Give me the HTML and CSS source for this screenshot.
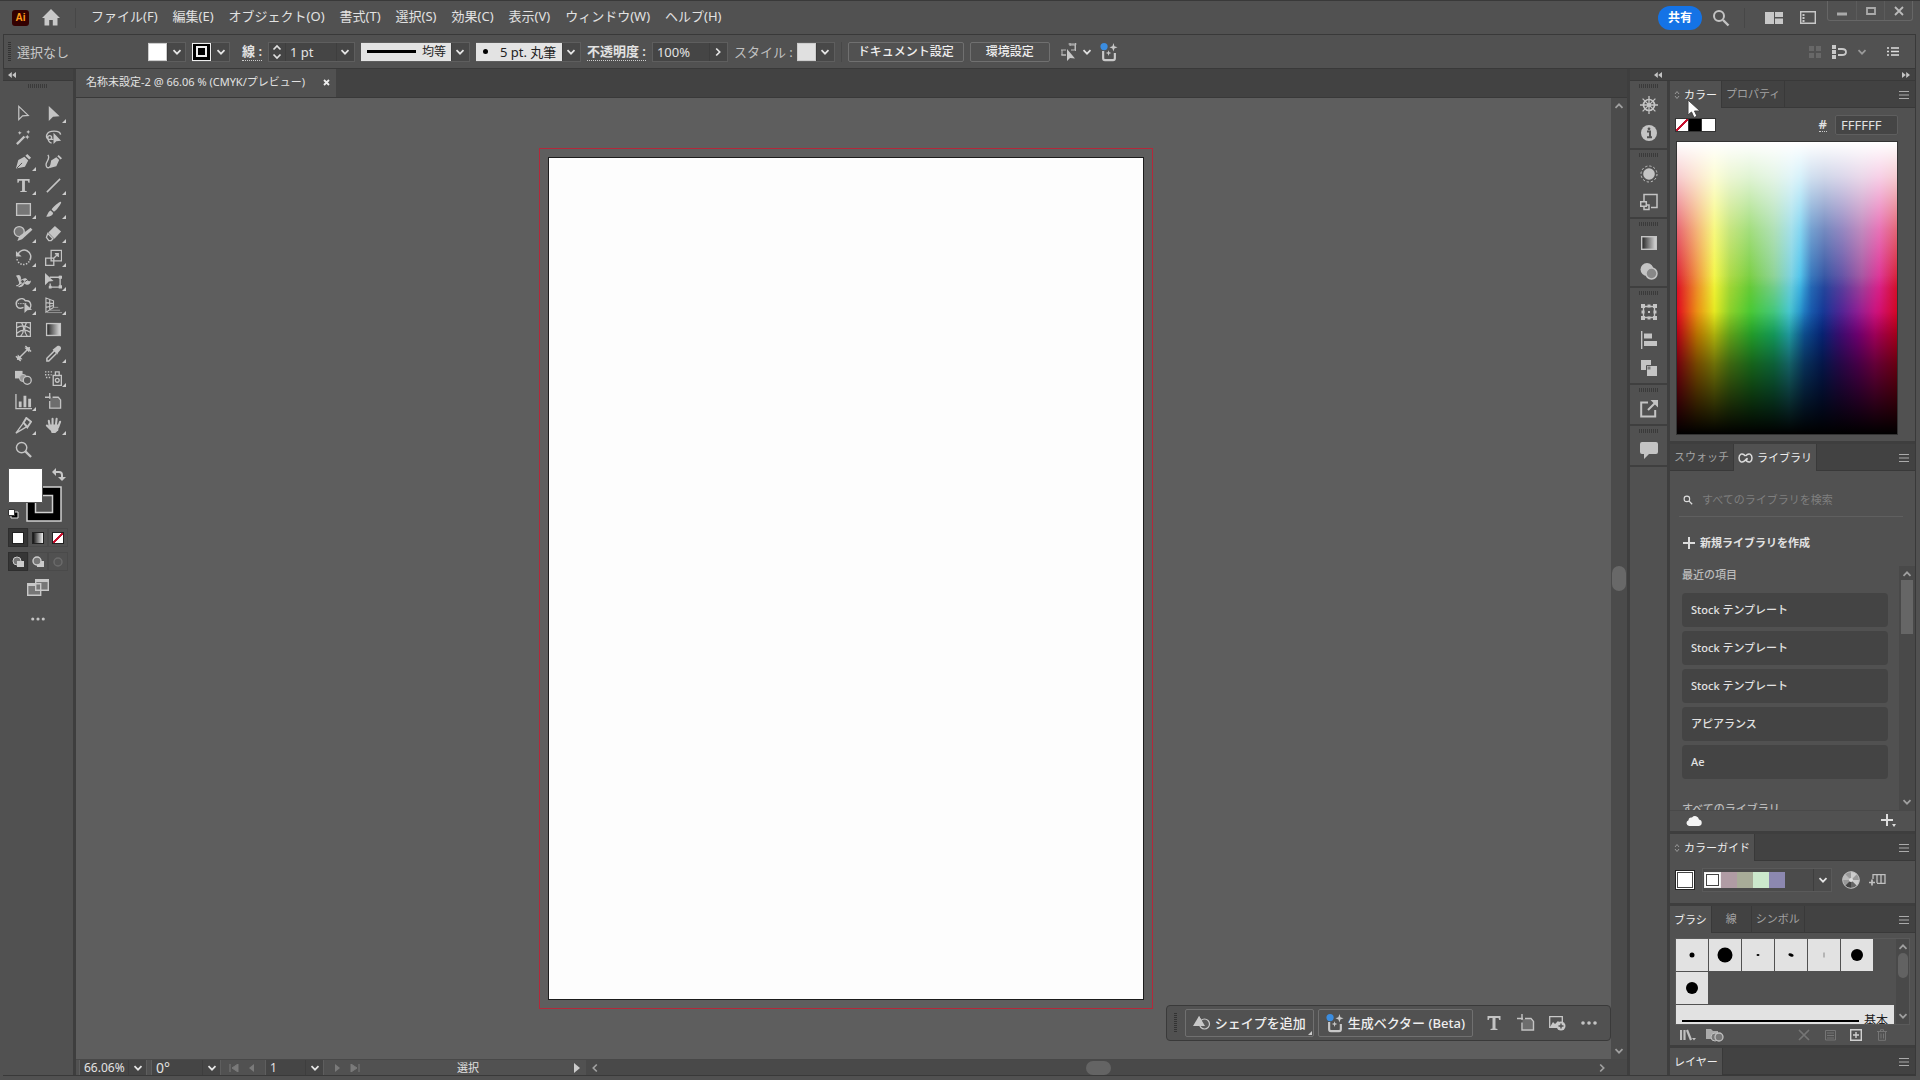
FILE: index.html
```html
<!DOCTYPE html>
<html lang="ja">
<head>
<meta charset="utf-8">
<title>名称未設定-2</title>
<link rel="stylesheet" href="styles.css">
</head>
<body>
<svg class="defs" aria-hidden="true">
  <symbol id="chev" viewBox="0 0 10 10"><path d="M1.500 3.200 5 6.700 8.500 3.200" fill="none" stroke="currentColor" stroke-width="1.700"/></symbol>
  <symbol id="burger" viewBox="0 0 10 8"><path d="M0 .5h10M0 4h10M0 7.500h10" stroke="currentColor" fill="none"/></symbol>
  <symbol id="updown" viewBox="0 0 6 10"><path d="M1 4 3 1.500 5 4M1 6l2 2.500L5 6" stroke="currentColor" fill="none"/></symbol>
  <symbol id="dleft" viewBox="0 0 8 6"><path d="M3.800 0v6L0 3zM8 0v6L4.200 3z" fill="currentColor"/></symbol>
  <symbol id="dots" viewBox="0 0 16 4"><g fill="currentColor"><circle cx="2" cy="2" r="1.800"/><circle cx="8" cy="2" r="1.800"/><circle cx="14" cy="2" r="1.800"/></g></symbol>
  <symbol id="search" viewBox="0 0 18 18"><circle cx="7" cy="7" r="5" fill="none" stroke="currentColor" stroke-width="2"/><path d="m11 11 5.500 5.500" stroke="currentColor" stroke-width="2.400"/></symbol>
  <symbol id="type" viewBox="0 0 18 18"><path d="M2.500 2h13v4h-1.200l-.8-2h-3v10.500l2 .5v1h-7v-1l2-.5V4h-3l-.8 2H2.500z" fill="currentColor"/></symbol>
  <symbol id="artb" viewBox="0 0 18 18"><path d="M5 0v6M0 4.500h6M5 8.500v7.500h11.500V7.500L14 4.500H8" fill="none" stroke="currentColor" stroke-width="1.400"/><path d="M5.500 5H13l3 3v7.500H5.500z" fill="currentColor" opacity=".25"/></symbol>
  <symbol id="gen" viewBox="0 0 20 22"><path d="M3.500 10v8q0 2 2 2h9q2 0 2-2v-6" fill="none" stroke="#c8c8c8" stroke-width="2.400"/><path d="m15 1 1 3.500 3.500 1.200-3.500 1.300-1 3.500-1.200-3.500-3.300-1.300 3.300-1.200zM9.500 9l.8 2.400 2.400.8-2.400.8-.8 2.400-.8-2.400-2.400-.8 2.400-.8z" fill="#c8c8c8"/><circle cx="4.500" cy="5" r="4" fill="#3b8de0"/></symbol>
  <symbol id="gradi" viewBox="0 0 18 18"><rect x="1.700" y="2.700" width="14.600" height="12.600" fill="url(#gg)" stroke="currentColor" stroke-width="1.400"/></symbol>
  <linearGradient id="gg"><stop offset="0" stop-color="#222"/><stop offset="1" stop-color="#ddd"/></linearGradient>
</svg>

<div class="app">
  <header class="menubar">
    <span class="logo">Ai</span>
    <button class="icon-btn" aria-label="ホーム"><svg width="18" height="17" viewBox="0 0 18 17"><path d="M9 0 18 9h-2.500v7.500h-4.700V11H7.200v5.500H2.500V9H0z" fill="#c8c8c8"/></svg></button>
    <i class="vr"></i>
    <nav class="menus">
      <button>ファイル(F)</button><button>編集(E)</button><button>オブジェクト(O)</button><button>書式(T)</button><button>選択(S)</button><button>効果(C)</button><button>表示(V)</button><button>ウィンドウ(W)</button><button>ヘルプ(H)</button>
    </nav>
    <div class="top-right">
      <button class="share">共有</button>
      <button class="icon-btn" aria-label="検索"><svg width="18" height="18"><use href="#search"/></svg></button>
      <i class="vr"></i>
      <button class="icon-btn wide" aria-label="ドキュメントを並べる"><svg width="18" height="12"><path d="M0 0h9v12H0zM10 0h8v5h-8zM10 6.500h8V12h-8z" fill="#c8c8c8"/></svg></button>
      <button class="icon-btn" aria-label="ワークスペース"><svg width="16" height="13"><path d="M.7.7h14.600v11.600H.7z" fill="none" stroke="#c8c8c8" stroke-width="1.400"/><path d="M3.500 3v8" stroke="#c8c8c8" stroke-width="2" stroke-dasharray="2 1"/></svg></button>
    </div>
    <div class="win">
      <button aria-label="最小化"><svg width="10" height="10"><path d="M0 8h10" stroke="#aaa" stroke-width="3"/></svg></button>
      <button aria-label="最大化"><svg width="10" height="10"><path d="M1 2h8v6H1z" fill="none" stroke="#aaa" stroke-width="1.800"/></svg></button>
      <button aria-label="閉じる"><svg width="10" height="10"><path d="m1 1 8 8M9 1 1 9" stroke="#bbb" stroke-width="1.800"/></svg></button>
    </div>
  </header>

  <section class="control">
    <i class="grip-v"></i>
    <span class="sel-state">選択なし</span>
    <div class="combo"><button class="sw white" aria-label="塗り"></button><button class="drop" aria-label="塗りを選択"><svg width="10" height="10"><use href="#chev"/></svg></button></div>
    <div class="combo"><button class="sw stroke" aria-label="線"></button><button class="drop" aria-label="線を選択"><svg width="10" height="10"><use href="#chev"/></svg></button></div>
    <label class="dotted strong lead" for="sw-width">線 :</label>
    <div class="combo field">
      <span class="spin"><svg width="10" height="16"><path d="M1.500 5.500 5 2l3.500 3.500M1.500 10.500 5 14l3.500-3.500" fill="none" stroke="#e0e0e0" stroke-width="1.700"/></svg></span>
      <input id="sw-width" class="w50" value="1 pt"><button class="drop" aria-label="線幅"><svg width="10" height="10"><use href="#chev"/></svg></button>
    </div>
    <div class="combo"><span class="light profile"><i></i><select aria-label="可変線幅プロファイル"><option>均等</option></select></span><button class="drop" aria-label="プロファイル"><svg width="10" height="10"><use href="#chev"/></svg></button></div>
    <div class="combo"><span class="light brush"><i></i><select aria-label="ブラシ定義"><option>5 pt. 丸筆</option></select></span><button class="drop" aria-label="ブラシ"><svg width="10" height="10"><use href="#chev"/></svg></button></div>
    <label class="dotted strong" for="opac">不透明度 :</label>
    <div class="combo field"><input id="opac" class="w56" value="100%"><button class="drop" aria-label="不透明度"><svg class="r270" width="10" height="10"><use href="#chev"/></svg></button></div>
    <span class="dim">スタイル :</span>
    <div class="combo"><button class="sw style" aria-label="スタイル"></button><button class="drop" aria-label="スタイルを選択"><svg width="10" height="10"><use href="#chev"/></svg></button></div>
    <i class="vr"></i>
    <button class="outline w116">ドキュメント設定</button>
    <button class="outline w80">環境設定</button>
    <button class="icon-btn sim" aria-label="類似オブジェクトを選択"><svg width="18" height="20" viewBox="0 0 18 20"><path d="M10 3h5v5h-4M1 8h5M2 8v5h4M8.500 2h8M15.500 1v8M10 1v3M1 13h5" fill="none" stroke="#bbb"/><path d="M7 7v12l3-3 5 .5z" fill="#c8c8c8"/></svg><svg width="10" height="10"><use href="#chev"/></svg></button>
    <button class="icon-btn" aria-label="生成"><svg width="18" height="20"><use href="#gen"/></svg></button>
    <div class="control-right">
      <svg width="14" height="14" fill="#686868"><path d="M1 1h5v5H1zM8 1h5v5H8zM1 8h5v5H1zM8 8h5v5H8z"/></svg>
      <svg width="15" height="14"><path d="M0 0h4v4H0zM0 5h4v4H0zM0 10h4v4H0z" fill="#c8c8c8"/><path d="M6 4h4q4 0 4 3t-4 3H6" fill="none" stroke="#c8c8c8" stroke-width="1.800"/></svg>
      <svg class="off" width="10" height="10"><use href="#chev"/></svg>
      <svg class="list" width="12" height="9"><path d="M0 1h2M4 1h8M0 4.500h2M4 4.500h8M0 8h2M4 8h8" stroke="#ddd" stroke-width="1.400"/></svg>
    </div>
  </section>

  <main class="work">
    <aside class="tools">
      <div class="dock-head"><svg width="8" height="6"><use href="#dleft"/></svg></div>
      <i class="grip"></i>
      <div class="tool-grid">
        <button aria-label="選択"><svg viewBox="0 0 18 18"><path d="M4 1.500v14l4-4 6-.5z" fill="none" stroke="currentColor" stroke-width="1.300"/></svg></button>
        <button class="more" aria-label="ダイレクト選択"><svg viewBox="0 0 18 18"><path d="M4 1v16l4.500-4.500 7-.5z" fill="currentColor"/></svg></button>
        <button aria-label="自動選択"><svg viewBox="0 0 18 18"><path d="m2 16 8-8" stroke="currentColor" stroke-width="2.400"/><path d="m13 6 .8 1.700 1.700.8-1.700.8L13 11l-.8-1.700-1.700-.8 1.700-.8zM5 2l.7 1.400 1.400.7-1.400.7L5 6.200l-.7-1.400-1.400-.7 1.400-.7zM14 1l.7 1.400 1.400.7-1.400.7L14 5.200l-.7-1.400-1.400-.7 1.400-.7z" fill="currentColor"/></svg></button>
        <button aria-label="なげなわ"><svg viewBox="0 0 18 18"><path d="M9 11H4a3.500 3.500 0 0 1-2-5c1.500-5 14-5 14.500 0M5 11a2 2 0 1 0-2-2q.500 5 4 6" fill="none" stroke="currentColor" stroke-width="1.500"/><path d="M9 4v12l3-3 5-.5z" fill="currentColor"/></svg></button>
        <button class="more" aria-label="ペン"><svg viewBox="0 0 18 18"><path d="m1 16.500 2.500-9L10 4l4 4-3.500 6.500zM11 3l2-2 4 4-2 2z" fill="currentColor"/><path d="m2 16 5.500-5.500" stroke="#515151"/></svg></button>
        <button aria-label="曲線"><svg viewBox="0 0 18 18"><path d="m5 16 1.500-8L12 4.500l3 3L12 14zM13 3.500 14.500 2 18 5.500 16.500 7z" fill="currentColor"/><path d="M3 2c4 5-5 8-1 13 2 2 4-1 6-4" fill="none" stroke="currentColor" stroke-width="1.400"/></svg></button>
        <button class="more" aria-label="文字"><svg><use href="#type"/></svg></button>
        <button class="more" aria-label="直線"><svg viewBox="0 0 18 18"><path d="M2 16 16 2" stroke="currentColor" stroke-width="1.700"/></svg></button>
        <button class="more" aria-label="長方形"><svg viewBox="0 0 18 18"><path d="M1.700 2.700h14.600v12.600H1.700z" fill="#777" stroke="currentColor" stroke-width="1.400"/></svg></button>
        <button class="more" aria-label="ブラシ"><svg viewBox="0 0 18 18"><path d="M17 1c1 1-5 9-7.500 10.500L7 9C9 6 16 0 17 1zM6 10l2.700 2.700C8 16 4 17 1 16.500 3 15 3 11 6 10z" fill="currentColor"/></svg></button>
        <button class="more" aria-label="Shaper"><svg class="w20" viewBox="0 0 20 18"><circle cx="6" cy="7" r="5.300" fill="#777" stroke="currentColor" stroke-width="1.400"/><path d="M18 3 20 5 9 15l-5 2 2-5z" fill="currentColor"/></svg></button>
        <button class="more" aria-label="消しゴム"><svg viewBox="0 0 18 18"><path d="m10.500 1 6.500 6-7 7.500L3.500 8z" fill="currentColor"/><path d="m3 9 5.500 5.500-2 2H4l-2.500-3.500z" fill="none" stroke="currentColor" stroke-width="1.400"/></svg></button>
        <button class="more" aria-label="回転"><svg viewBox="0 0 18 18"><path d="M3 6a7 7 0 1 1 12.500 6" fill="none" stroke="currentColor" stroke-width="1.600"/><path d="M15 13a7 7 0 0 1-13-4" fill="none" stroke="currentColor" stroke-width="1.600" stroke-dasharray="1.500 1.500"/><path d="M1 2v6h6z" fill="currentColor"/></svg></button>
        <button class="more" aria-label="拡大・縮小"><svg viewBox="0 0 18 18"><path d="M6.500 1.500h11v11h-11zM.7 9.700h8.600v7.600H.7zM9 10l5-5m-3.500 0H14v3.500" fill="none" stroke="currentColor" stroke-width="1.400"/></svg></button>
        <button class="more" aria-label="線幅"><svg viewBox="0 0 18 18"><path d="M1 3c5-3 6 2 5 5 2-2 5-4 7-1 1 2 2 2 4 1-1 6-5 5-7 3-2 5-8 5-9 2 3 0 4-2 3-4S3 5 1 3z" fill="currentColor"/><path d="m2 15 13-9" stroke="#515151"/><circle cx="8" cy="9" r="2" fill="#515151" stroke="currentColor"/></svg></button>
        <button class="more" aria-label="自由変形"><svg viewBox="0 0 18 18"><path d="M5 4.500h12M16 3v13M4.500 15H17M5.500 11v5" fill="none" stroke="currentColor" stroke-width="1.400"/><path d="M0 0v13l4-4 5-.5zM14.500 3H18v3h-3.500zM14.500 13H18v3.500h-3.500zM4 13.500h3v3H4z" fill="currentColor"/></svg></button>
        <button class="more" aria-label="シェイプ形成"><svg viewBox="0 0 18 18"><path d="M2 10C-1 3 8-1 11 4c7-1 7 8 3 9M2 10c2 3 5 2 7 1" fill="none" stroke="currentColor" stroke-width="1.500"/><path d="M3 7h10" stroke="currentColor" stroke-dasharray="1.500 1"/><path d="M10 6v11l3-3 5-.5z" fill="currentColor"/></svg></button>
        <button class="more" aria-label="遠近グリッド"><svg viewBox="0 0 18 18"><path d="M1 1v15l8-5V4zM1 6l8 1M1 11l8-2M5 3v10" fill="none" stroke="currentColor" stroke-width="1.200"/><path d="M9 11h5M5 14h11M2 16.500h16" stroke="#999"/></svg></button>
        <button aria-label="メッシュ"><svg viewBox="0 0 18 18"><path d="M1.700 1.700h14.600v14.600H1.700zM2 7q7-4 14 1M2 13q7-6 14-1M7 2q5 7-1 14M12 2q-4 8 1 14" fill="none" stroke="currentColor" stroke-width="1.300"/></svg></button>
        <button aria-label="グラデーション"><svg><use href="#gradi"/></svg></button>
        <button aria-label="ものさし"><svg viewBox="0 0 18 18"><path d="m4 14 9-9M1 12l5 5M11 1l6 6" stroke="currentColor" stroke-width="1.500"/><path d="m2 16 1-6 5 5zM16 2l-1 6-5-5z" fill="currentColor"/></svg></button>
        <button class="more" aria-label="スポイト"><svg viewBox="0 0 18 18"><path d="m10 6-8 8v3h2l8-8" fill="none" stroke="currentColor" stroke-width="1.600"/><path d="m8 5 2-1.500L13 1c3-1 5 2 3.500 4L14 8l-1 2z" fill="currentColor"/></svg></button>
        <button aria-label="ブレンド"><svg viewBox="0 0 18 18"><path d="M0 2h8v8H0z" fill="currentColor"/><circle cx="8.500" cy="9.500" r="3.800" fill="#999" stroke="currentColor"/><circle cx="13" cy="12" r="4.200" fill="#555" stroke="currentColor" stroke-width="1.400"/></svg></button>
        <button class="more" aria-label="シンボルスプレー"><svg viewBox="0 0 18 18"><path d="M8.700 6.700h8.600v10.600H8.700zM11 3h4v4h-4z" fill="none" stroke="currentColor" stroke-width="1.400"/><circle cx="13" cy="12" r="2" fill="none" stroke="currentColor" stroke-width="1.400"/><path d="M0 3h9M0 6h7M1 9h5" stroke="currentColor" stroke-width="1.500" stroke-dasharray="1.500 1.500"/></svg></button>
        <button class="more" aria-label="グラフ"><svg viewBox="0 0 18 18"><path d="M1 1v15.500h17" fill="none" stroke="currentColor" stroke-width="1.400"/><path d="M4 9h3v6H4zM9 3h3v12H9zM14 6h3v9h-3z" fill="currentColor"/></svg></button>
        <button aria-label="アートボード"><svg><use href="#artb"/></svg></button>
        <button class="more" aria-label="スライス"><svg viewBox="0 0 18 18"><path d="m1 17 8-11 4 4z" fill="none" stroke="currentColor" stroke-width="1.400"/><path d="M12 1l5 4-4 6-4-5z" fill="none" stroke="currentColor" stroke-width="2"/></svg></button>
        <button class="more" aria-label="手のひら"><svg viewBox="0 0 18 18"><path d="M5 10 4 4M8 9V2M11.500 9l.8-7M14 10.500 16 5M6 13 2 9" stroke="currentColor" stroke-width="2.200" stroke-linecap="round"/><path d="M4 8h11l-1 6-3 3H7z" fill="currentColor"/></svg></button>
        <button aria-label="ズーム"><svg viewBox="0 0 18 18"><circle cx="7" cy="7" r="5.500" fill="none" stroke="currentColor" stroke-width="1.500"/><path d="m11 11 6 6" stroke="currentColor" stroke-width="2.400"/></svg></button>
      </div>
      <svg class="fillstroke" width="62" height="56" viewBox="0 0 62 56">
        <path d="M20 20h34v34H20z" fill="#000" stroke="#d0d0d0" stroke-width="1.500"/><path d="M28.500 28.500h17v17h-17z" fill="#515151" stroke="#d0d0d0" stroke-width="1.500"/>
        <path d="M1.500 1.500h34v34h-34z" fill="#fff" stroke="#555"/>
        <path d="M48 5h4q3 0 3 3v4" fill="none" stroke="#c8c8c8" stroke-width="2"/><path d="M45 5l4-4v8zM51 10h8l-4 4z" fill="#c8c8c8"/>
        <path d="M4 45h7v6H4z" fill="#000" stroke="#ddd"/><path d="M1.500 42.500h6v6h-6z" fill="#fff" stroke="#333"/>
      </svg>
      <div class="modes">
        <button class="on" aria-label="カラー"><i class="m white"></i></button><button aria-label="グラデーション"><i class="m grad"></i></button><button aria-label="なし"><i class="m none"></i></button>
        <button class="on" aria-label="標準描画"><svg width="12" height="12"><circle cx="5" cy="5" r="4" fill="#777" stroke="#ccc"/><path d="M5 5h7v6H5z" fill="#ccc"/></svg></button><button aria-label="背面描画"><svg width="12" height="12"><path d="M5 5h7v6H5z" fill="#ccc"/><circle cx="5" cy="5" r="4" fill="#777" stroke="#ccc" stroke-width="1.400"/></svg></button><button aria-label="内側描画"><svg width="12" height="12"><circle cx="6" cy="6" r="4" fill="#555" stroke="#6c6c6c" stroke-width="1.400"/></svg></button>
      </div>
      <button class="icon-btn screen" aria-label="スクリーンモード"><svg width="22" height="17"><path d="M.7 4.700h13v11.600H.7zM8.700.7h12.600v10.600H8.700z" fill="#777" stroke="#c8c8c8" stroke-width="1.400"/><path d="M1 6h7M9 2h12" stroke="#c8c8c8" stroke-width="2"/></svg></button>
      <button class="icon-btn" aria-label="ツールバーを編集"><svg width="14" height="4"><use href="#dots"/></svg></button>
    </aside>

    <section class="doc">
      <div class="doc-tabs"><div class="doc-tab"><span>名称未設定-2 @ 66.06 % (CMYK/プレビュー)</span><button aria-label="閉じる"><svg width="7" height="7"><path d="m1 1 5 5M6 1 1 6" stroke="#eee" stroke-width="1.800"/></svg></button></div></div>
      <div class="view">
        <div class="canvas">
          <div class="bleed"><div class="artboard"></div></div>
          <div class="taskbar">
            <i class="grip-v"></i>
            <button class="outline more"><svg width="18" height="16"><path d="m6 1 6 10H0z" fill="#c8c8c8"/><circle cx="11.500" cy="9" r="5" fill="#5a5a5a" stroke="#c8c8c8" stroke-width="1.200"/><path d="m6 1 6 10H4z" fill="#c8c8c8"/></svg>シェイプを追加</button>
            <button class="outline"><svg width="18" height="20" viewBox="0 0 20 22"><use href="#gen"/></svg>生成ベクター (Beta)</button>
            <button class="icon-btn" aria-label="文字"><svg width="18" height="18"><use href="#type"/></svg></button>
            <button class="icon-btn" aria-label="アートボード"><svg width="18" height="18"><use href="#artb"/></svg></button>
            <button class="icon-btn" aria-label="配置"><svg width="18" height="16"><path d="M.7 1.700h12.600v10.600H.7z" fill="none" stroke="#c8c8c8" stroke-width="1.300"/><path d="m1 12 3-5 2 2 3-3 3 3v3z" fill="#c8c8c8"/><circle cx="12" cy="11" r="4.500" fill="#c8c8c8"/><path d="M12 8.500v5M9.500 11h5" stroke="#515151" stroke-width="1.400"/></svg></button>
            <button class="icon-btn" aria-label="その他"><svg width="16" height="4"><use href="#dots"/></svg></button>
          </div>
        </div>
        <div class="vscroll"><svg class="r180" width="10" height="10"><use href="#chev"/></svg><i></i><svg width="10" height="10"><use href="#chev"/></svg></div>
      </div>
      <footer class="status">
        <div class="combo field"><input class="w48" value="66.06%" aria-label="ズーム"><button class="drop" aria-label="ズーム値"><svg width="10" height="10"><use href="#chev"/></svg></button></div>
        <div class="combo field"><input class="w50 big" value="0°" aria-label="回転"><button class="drop" aria-label="回転角度"><svg width="10" height="10"><use href="#chev"/></svg></button></div>
        <div class="nav"><svg width="10" height="8"><path d="M1 0v8M9 0v8L3 4z" fill="#7a7a7a" stroke="#7a7a7a"/></svg><svg width="10" height="8"><path d="M7 0v8L2 4z" fill="#7a7a7a"/></svg></div>
        <div class="combo field"><input class="w39" value="1" aria-label="アートボード番号"><button class="drop" aria-label="アートボード選択"><svg width="10" height="10"><use href="#chev"/></svg></button></div>
        <div class="nav"><svg width="10" height="8"><path d="M3 0v8l5-4z" fill="#7a7a7a"/></svg><svg width="10" height="8"><path d="M9 0v8M1 0v8l6-4z" fill="#7a7a7a" stroke="#7a7a7a"/></svg></div>
        <span class="tool-name">選択</span>
        <button class="icon-btn play" aria-label="ステータス表示"><svg width="6" height="10"><path d="M0 0v10l6-5z" fill="#ccc"/></svg></button>
        <div class="hscroll"><svg class="r90" width="10" height="10"><use href="#chev"/></svg><i></i><svg class="r270" width="10" height="10"><use href="#chev"/></svg></div>
      </footer>
    </section>

    <aside class="right">
      <div class="dock-head two"><svg width="8" height="6"><use href="#dleft"/></svg><svg class="r180" width="8" height="6"><use href="#dleft"/></svg></div>
      <div class="dock">
        <div class="strip">
          <div class="group"><i class="grip"></i>
            <button aria-label="ナビゲーター"><svg viewBox="0 0 18 18"><g fill="none" stroke="currentColor"><circle cx="9" cy="9" r="5.500" stroke-width="1.700"/><path d="M9 0v18M0 9h18M2.600 2.600l12.800 12.800M15.400 2.600 2.600 15.400" stroke-width="1.300"/></g><circle cx="9" cy="9" r="2" fill="currentColor"/></svg></button>
            <button aria-label="情報"><svg viewBox="0 0 18 18"><circle cx="9" cy="9" r="8" fill="currentColor"/><path d="M7 7.500h3V13M7 13.300h5" fill="none" stroke="#515151" stroke-width="2"/><circle cx="9" cy="4.800" r="1.400" fill="#515151"/></svg></button></div>
          <div class="group"><i class="grip"></i>
            <button aria-label="アピアランス"><svg viewBox="0 0 18 18"><circle cx="9" cy="9" r="5.800" fill="currentColor"/><circle cx="9" cy="9" r="8" fill="none" stroke="currentColor" stroke-dasharray="2.200 2"/></svg></button>
            <button aria-label="アセット"><svg viewBox="0 0 18 18"><path d="M4 8V1.500h13v13h-6M.7 8.700h5.600v4.600H.7zM4 14v2.500h5V12H6" fill="none" stroke="currentColor" stroke-width="1.500"/></svg></button></div>
          <div class="group"><i class="grip"></i>
            <button aria-label="グラデーション"><svg><use href="#gradi"/></svg></button>
            <button aria-label="透明"><svg viewBox="0 0 18 18"><circle cx="7" cy="7.500" r="6.500" fill="currentColor"/><circle cx="11.500" cy="11.500" r="5.500" fill="#888" stroke="currentColor" stroke-width="1.500"/></svg></button></div>
          <div class="group"><i class="grip"></i>
            <button aria-label="変形"><svg viewBox="0 0 18 18"><path d="M3.500 3.500h11v11h-11z" fill="none" stroke="currentColor" stroke-width="1.400"/><path d="M1 1h4v4H1zM13 1h4v4h-4zM1 13h4v4H1zM13 13h4v4h-4zM7.500 1.500h3v3h-3zM7.500 13.500h3v3h-3zM1.500 7.500h3v3h-3zM13.500 7.500h3v3h-3zM8 8h2v2H8z" fill="currentColor"/></svg></button>
            <button aria-label="整列"><svg viewBox="0 0 18 18"><path d="M1.700 0v18" stroke="currentColor" stroke-width="1.400"/><path d="M4 2.500h8v5H4zM4 10h13v5H4z" fill="currentColor"/></svg></button>
            <button aria-label="パスファインダー"><svg viewBox="0 0 18 18"><path d="M1 1h10v10H1zM7 7h10v10H7z" fill="currentColor"/><path d="M6.500 12V6.500H12" fill="none" stroke="#515151"/><path d="M7.500 7.500h3v3h-3z" fill="#777"/></svg></button></div>
          <div class="group"><i class="grip"></i>
            <button aria-label="書き出し"><svg viewBox="0 0 18 18"><path d="M8 2.500H1.200v14h14V10M8 10l8-8" fill="none" stroke="currentColor" stroke-width="2"/><path d="M10.500 0H18v7.500z" fill="currentColor"/></svg></button></div>
          <div class="group"><i class="grip"></i>
            <button aria-label="コメント"><svg viewBox="0 0 18 18"><path d="M2 1h14a2 2 0 0 1 2 2v8a2 2 0 0 1-2 2H9l-5 5v-5H2a2 2 0 0 1-2-2V3a2 2 0 0 1 2-2z" fill="currentColor"/></svg></button></div>
        </div>

        <div class="panels">
          <section class="panel color">
            <div class="tabs"><button class="on"><svg width="6" height="10"><use href="#updown"/></svg>カラー</button><button>プロパティ</button><button class="menu" aria-label="メニュー"><svg width="10" height="8"><use href="#burger"/></svg></button></div>
            <div class="color-row"><span class="minis"><i class="none"></i><i class="black"></i><i class="white"></i></span><label class="dotted strong" for="hex">#</label><input id="hex" value="FFFFFF"></div>
            <div class="spectrum"></div>
            <svg class="pointer" width="14" height="19" viewBox="0 0 14 19"><path d="M1 1v15l3.500-3 2.500 5.500 3-1.300-2.500-5.200H13z" fill="#fff" stroke="#444"/></svg>
          </section>

          <section class="panel lib">
            <div class="tabs"><button>スウォッチ</button><button class="on"><svg width="15" height="10"><path d="M7.500 3C4 -1 1 1.500 1 5s3 6 6.500 2C11 3 8 9 7.500 7M7.500 3c3.500-4 6.500-1.500 6.500 2s-3 6-6.500 2" fill="none" stroke="#ddd" stroke-width="1.500"/></svg>ライブラリ</button><button class="menu" aria-label="メニュー"><svg width="10" height="8"><use href="#burger"/></svg></button></div>
            <div class="search"><svg width="10" height="10" viewBox="0 0 18 18"><use href="#search"/></svg><input placeholder="すべてのライブラリを検索" aria-label="すべてのライブラリを検索"></div>
            <button class="newlib"><svg width="12" height="12"><path d="M6 0v12M0 6h12" stroke="#ddd" stroke-width="2"/></svg>新規ライブラリを作成</button>
            <div class="lib-body">
              <div class="lib-list">
                <h3>最近の項目</h3>
                <button>Stock テンプレート</button><button>Stock テンプレート</button><button>Stock テンプレート</button><button>アピアランス</button><button>Ae</button>
                <h3 class="all">すべてのライブラリ</h3>
              </div>
              <div class="sb"><svg class="r180" width="10" height="10"><use href="#chev"/></svg><i></i><svg width="10" height="10"><use href="#chev"/></svg></div>
            </div>
            <div class="lib-foot"><svg width="16" height="11"><path d="M3 11a3 3 0 0 1-.5-5.800A3 3 0 0 1 6 2.500 4 4 0 0 1 13 4.500 3.300 3.300 0 0 1 13 11z" fill="#f4f4f4"/></svg><button class="icon-btn" aria-label="追加"><svg width="15" height="13"><path d="M6 0v12M0 6h12" stroke="#ddd" stroke-width="2"/><path d="M11 10h4l-2 3z" fill="#ddd"/></svg></button></div>
          </section>

          <section class="panel">
            <div class="tabs"><button class="on"><svg width="6" height="10"><use href="#updown"/></svg>カラーガイド</button><button class="menu" aria-label="メニュー"><svg width="10" height="8"><use href="#burger"/></svg></button></div>
            <div class="guide"><i class="framed base"></i><div class="harmony"><i class="framed"></i><i class="g1"></i><i class="g2"></i><i class="g3"></i><i class="g4"></i><button class="drop" aria-label="ハーモニールール"><svg width="10" height="10"><use href="#chev"/></svg></button></div>
              <svg width="18" height="18" viewBox="0 0 18 18"><circle cx="9" cy="9" r="8.500" fill="#999"/><path d="M9 9V.5A8.500 8.500 0 0 1 15 3zM9 9h8.500a8.500 8.500 0 0 1-2.500 6z" fill="#ccc"/><path d="M9 9 3 15a8.500 8.500 0 0 0 6 2.500z" fill="#444"/><path d="M9 9 3 3A8.500 8.500 0 0 0 .5 9z" fill="#bbb"/><path d="M9 9v8.500l6-2.500z" fill="#666"/><circle cx="9" cy="9" r="2" fill="#ddd"/><circle cx="9" cy="9" r="8.300" fill="none" stroke="#bbb"/></svg>
              <svg width="17" height="14"><path d="M4 6V1.700h12v8.600H8M8 2v8M12 2v8" fill="none" stroke="#c0c0c0" stroke-width="1.300"/><path d="M0 9.500h6M3 6.500v6" stroke="#c0c0c0" stroke-width="1.700"/></svg></div>
          </section>

          <section class="panel">
            <div class="tabs"><button class="on">ブラシ</button><button>線</button><button>シンボル</button><button class="menu" aria-label="メニュー"><svg width="10" height="8"><use href="#burger"/></svg></button></div>
            <div class="brushes">
              <div class="cells">
                <span><svg viewBox="0 0 32 32"><circle cx="16" cy="16" r="2.500"/></svg></span><span><svg viewBox="0 0 32 32"><circle cx="16" cy="16" r="7.500"/></svg></span><span><svg viewBox="0 0 32 32"><ellipse cx="16" cy="16" rx="1.500" ry="1"/></svg></span><span><svg viewBox="0 0 32 32"><ellipse cx="16" cy="16" rx="2.700" ry="1.500" transform="rotate(15 16 16)"/></svg></span><span><svg viewBox="0 0 32 32"><path d="M16 13.500v5" stroke="#888"/></svg></span><span><svg viewBox="0 0 32 32"><circle cx="16" cy="16" r="6"/></svg></span><span><svg viewBox="0 0 32 32"><circle cx="16" cy="16" r="6"/></svg></span>
                <span class="basic"><i></i>基本</span>
              </div>
              <div class="sb slim"><svg class="r180" width="10" height="10"><use href="#chev"/></svg><i></i><svg width="10" height="10"><use href="#chev"/></svg></div>
            </div>
            <div class="brush-foot">
              <svg width="16" height="12"><path d="M1 1v10M4.500 1v10M7 1l4 10" stroke="#c0c0c0" stroke-width="2.200"/><path d="M12 9h4l-2 2.500z" fill="#c0c0c0"/></svg>
              <svg width="18" height="14"><path d="M0 1h5l2 2h5v8H0z" fill="#aaa"/><circle cx="9" cy="9" r="4" fill="#777" stroke="#c0c0c0"/><circle cx="13" cy="9" r="4" fill="#777" stroke="#c0c0c0" stroke-width="1.300"/></svg>
              <div class="brush-actions">
                <svg width="12" height="12"><path d="m1 1 10 10M11 1 1 11" stroke="#757575" stroke-width="1.700"/></svg>
                <svg width="12" height="12"><path d="M1.500 1.500h10v9.500h-10zM3 4h7M3 6.500h7M3 9h7" fill="none" stroke="#757575"/></svg>
                <svg width="12" height="12"><path d="M.7.7h10.600v10.600H.7zM6 3v6M3 6h6" fill="none" stroke="#d0d0d0" stroke-width="1.400"/></svg>
                <svg width="12" height="12"><path d="M1 2.500h10M4.500 2V.7h3V2M2.500 3v8.300h7V3M5 4.500v5M7.500 4.500v5" fill="none" stroke="#757575"/></svg>
              </div>
            </div>
          </section>

          <section class="panel last"><div class="tabs"><button class="on">レイヤー</button><button class="menu" aria-label="メニュー"><svg width="10" height="8"><use href="#burger"/></svg></button></div></section>
        </div>
      </div>
    </aside>
  </main>
</div>
</body>
</html>
```

FILE: styles.css
```css
:root {
  --bg: #515151;
  --dark: #424242;
  --field: #454545;
  --line: #393939;
  --edge: #5e5e5e;
  --text: #e2e2e2;
  --icon: #c4c4c4;
}
* { box-sizing: border-box; }
body {
  margin: 0;
  background: var(--bg);
  color: var(--text);
  font: 13px/18px "Noto Sans", "Noto Sans CJK JP", sans-serif;
}
button, input, select { font: inherit; color: inherit; background: none; border: 0; padding: 0; margin: 0; min-width: 0; }
select { appearance: none; }
i { display: block; flex: none; }
svg { display: block; flex: none; }
.defs { position: absolute; width: 0; height: 0; }
.r90 { transform: rotate(90deg); }
.r180 { transform: rotate(180deg); }
.r270 { transform: rotate(270deg); }

.app { height: 100vh; display: flex; flex-direction: column; padding: 0 4px 4px 3px; border-top: 1px solid var(--line); overflow: hidden; }
.vr { width: 1px; height: 20px; background: #474747; }
.icon-btn { display: flex; align-items: center; justify-content: center; color: var(--icon); }
.strong { font-weight: 600; }
.dotted { border-bottom: 1px dotted #ccc; }

/* menu bar */
.menubar { height: 33px; display: flex; align-items: center; padding-left: 9px; flex: none; }
.logo { width: 17px; height: 16px; border-radius: 3px; background: #330000; color: #ff9a1a; font: bold 10px/16px "Liberation Sans", sans-serif; text-align: center; margin-right: 13px; }
.menubar > .vr { margin: 0 15px; }
.menus { display: flex; gap: 15px; padding-bottom: 3px; white-space: nowrap; }
.top-right { margin-left: auto; display: flex; align-items: center; gap: 10px; }
.top-right .vr { margin: 0 10px 0 4px; }
.wide { margin-right: 7px; }
.share { width: 44px; height: 24px; border-radius: 12px; background: #1473e6; color: #fff; font-weight: 700; font-size: 12px; line-height: 16px; }
.win { align-self: flex-start; display: flex; margin: 0 3px 0 11px; border: 1px solid #666; border-top: 0; border-radius: 0 0 3px 3px; }
.win button { width: 28px; height: 19px; display: flex; align-items: center; justify-content: center; }
.win button + button { border-left: 1px solid #5c5c5c; }

/* control bar */
.control { height: 35px; flex: none; display: flex; align-items: center; gap: 6px; border: 1px solid var(--line); padding-left: 4px; white-space: nowrap; }
.grip-v { width: 3px; height: 20px; background: repeating-linear-gradient(#333 0 1px, transparent 1px 2px); }
.sel-state { width: 125px; color: #c8c8c8; }
.combo { display: flex; height: 20px; flex: none; background: #484848; border: 1px solid var(--edge); border-left: 0; }
.lead { margin-left: 6px; }
.combo.field { background: var(--field); border-left: 1px solid var(--edge); }
.drop { width: 18px; display: flex; align-items: center; justify-content: center; color: #e6e6e6; border-left: 1px solid #3e3e3e; }
.sw { width: 19px; border: 1px solid #ccc; }
.white { background: #fff; }
.black { background: #000; }
.stroke { background: #000; border: 1px solid #eee; display: flex; align-items: center; justify-content: center; }
.stroke::before { content: ""; width: 7px; height: 7px; border: 2px solid #eee; background: #000; }
.style { background: #e0e0e0; }
.spin { width: 17px; display: flex; align-items: center; justify-content: center; border-right: 1px solid #3e3e3e; }
.field input { padding-left: 4px; }
.w39 { width: 39px; }
.w48 { width: 48px; }
.w50 { width: 50px; }
.w56 { width: 56px; }
.light { display: flex; align-items: center; background: #e3e3e3; color: #222; }
.profile { width: 90px; padding: 0 4px 0 6px; gap: 6px; }
.profile i { width: 49px; height: 3px; background: #000; }
.profile select { font-size: 12px; }
.brush { width: 86px; padding-left: 7px; gap: 12px; }
.brush i { width: 5px; height: 5px; border-radius: 50%; background: #000; }
.dim { color: #c0c0c0; }
.dim + .combo { margin-left: -2px; }
.outline { height: 24px; border: 1px solid #707070; border-radius: 2px; color: #eee; font-weight: 500; }
.control .outline { font-size: 12px; height: 20px; line-height: 16px; }
.w116 { width: 116px; }
.w80 { width: 80px; }
.sim { gap: 4px; margin: 0 2px 0 4px; color: #e0e0e0; }
.control-right { margin-left: auto; display: flex; align-items: center; gap: 10px; padding-right: 16px; }
.off { opacity: .5; }
.list { margin-left: 10px; }

/* workspace */
.work { flex: 1; min-height: 0; display: flex; gap: 3px; background: #3e3e3e; border: solid var(--line); border-width: 0 1px 1px 0; }
.dock-head { height: 12px; flex: none; background: var(--dark); color: #c4c4c4; display: flex; align-items: center; padding: 0 5px; border-bottom: 1px solid var(--line); }
.two { justify-content: space-between; padding-left: 24px; }
.grip { width: 20px; height: 4px; background: repeating-linear-gradient(90deg, #3a3a3a 0 1px, transparent 1px 2px); }
.tools { width: 70px; flex: none; background: var(--bg); display: flex; flex-direction: column; align-items: center; }
.tools .dock-head { align-self: stretch; }
.tools > .grip { margin: 3px 0 13px; }
.tool-grid { display: grid; grid-template-columns: 30px 30px; grid-auto-rows: 24px; color: var(--icon); }
.tool-grid button { position: relative; display: flex; align-items: center; justify-content: center; }
.tool-grid svg { width: 17px; height: 17px; }
.tool-grid .w20 { width: 20px; }
.more { position: relative; }
.more::after { content: ""; position: absolute; right: 2px; bottom: 2px; border: solid transparent; border-width: 2px; border-right-color: #ccc; border-bottom-color: #ccc; }
.fillstroke { margin: 6px 0 5px; }
.modes { display: grid; grid-template-columns: repeat(3, 20px); gap: 5px 0; }
.modes button { height: 19px; display: flex; align-items: center; justify-content: center; border: 1px solid #4a4a4a; }
.modes .on { background: #363636; border-color: #2e2e2e; }
.m { width: 12px; height: 12px; border: 1px solid #222; }
.m.grad { background: linear-gradient(90deg, #111, #eee); }
.none { background: linear-gradient(135deg, #fff 43%, #c8102e 43% 57%, #fff 57%); }
.screen { margin: 8px 0 21px; }

/* document */
.doc { flex: 1; min-width: 0; display: flex; flex-direction: column; }
.doc-tabs { height: 29px; flex: none; background: var(--dark); border-bottom: 1px solid var(--line); display: flex; }
.doc-tab { display: flex; align-items: center; gap: 16px; padding: 0 6px 2px 10px; width: 260px; justify-content: space-between; background: var(--bg); font-size: 11px; white-space: nowrap; }
.view { flex: 1; min-height: 0; display: flex; }
.canvas { flex: 1; min-width: 0; position: relative; background: #5e5e5e; display: flex; align-items: center; justify-content: center; padding-left: 5px; overflow: hidden; }
.bleed { width: 614px; height: 861px; border: 1px solid #b4283a; padding: 8px; }
.artboard { height: 100%; background: #fdfdfd; border: 1px solid #1c1c1c; }
.vscroll, .sb { width: 16px; flex: none; background: #4b4b4b; display: flex; flex-direction: column; align-items: center; justify-content: space-between; padding: 3px 0; color: #a0a0a0; }
.vscroll i { width: 14px; height: 25px; border-radius: 7px; background: #686868; }
.taskbar { position: absolute; right: 0; bottom: 18px; height: 36px; display: flex; align-items: center; gap: 4px; padding: 0 13px 0 7px; background: var(--bg); border: 1px solid #3a3a3a; border-radius: 4px; white-space: nowrap; }
.taskbar .outline { height: 28px; padding: 0 7px; display: flex; align-items: center; gap: 4px; }
.taskbar .grip-v { margin-right: 4px; }
.taskbar .icon-btn { margin-left: 8px; }
.taskbar .icon-btn + .icon-btn { margin-left: 10px; }
.taskbar .more::after { right: 1px; bottom: 1px; }
.status { height: 16px; flex: none; display: flex; align-items: center; background: var(--bg); padding-left: 3px; gap: 4px; font-size: 12px; line-height: 16px; border-top: 1px solid #484848; overflow: hidden; }
.status .combo { height: 18px; }
.status .big { font-size: 14px; }
.nav { display: flex; gap: 8px; padding-left: 4px; width: 36px; }
.tool-name { width: 200px; text-align: center; font-size: 11px; }
.play { margin: 0 2px; }
.hscroll { flex: 1; height: 16px; background: #494949; display: flex; align-items: center; justify-content: space-between; color: #a0a0a0; padding: 0 20px 0 4px; }
.hscroll i { width: 25px; height: 14px; border-radius: 7px; background: #646464; }

/* dock */
.right { width: 285px; flex: none; display: flex; flex-direction: column; }
.dock { flex: 1; min-height: 0; display: flex; gap: 3px; }
.strip { width: 37px; flex: none; background: var(--bg); color: var(--icon); }
.group { display: flex; flex-direction: column; align-items: center; padding: 3px 0 1px; border-bottom: 2px solid #3f3f3f; }
.group .grip { margin-bottom: 3px; }
.group button { height: 28px; width: 37px; display: flex; align-items: center; justify-content: center; }
.group svg { width: 18px; height: 18px; }
.panels { flex: 1; min-width: 0; display: flex; flex-direction: column; gap: 3px; }
.panel { background: var(--bg); flex: none; }
.tabs { height: 27px; display: flex; background: var(--dark); border-bottom: 1px solid var(--line); font-size: 11px; white-space: nowrap; flex: none; }
.tabs button { display: flex; align-items: center; justify-content: center; gap: 4px; min-width: 40px; padding: 0 4px; color: #a2a2a2; border-right: 1px solid var(--line); }
.tabs .on { background: var(--bg); color: #eee; margin-bottom: -1px; }
.tabs .on svg { color: #999; }
.tabs .menu { margin-left: auto; min-width: 0; border: 0; padding: 2px 6px 0; color: #aaa; }
.color { position: relative; height: 360px; }
.color-row { height: 33px; display: flex; align-items: center; padding: 0 17px 0 5px; }
.minis { display: flex; margin-right: auto; border: 1px solid #333; }
.minis i { width: 13px; height: 12px; border-right: 1px solid #333; }
.minis i:last-child { border: 0; }
.color-row input { width: 63px; height: 20px; margin-left: 8px; padding-left: 5px; background: var(--field); border: 1px solid var(--edge); border-radius: 2px; }
.color-row label { line-height: 14px; }
.spectrum {
  position: relative; height: 294px; margin: 0 17px 0 6px; border: 1px solid #333;
  background: linear-gradient(90deg, #dc1428 0, #ee8c32 9%, #f3f53c 17%, #a8d83a 24%, #72cc38 33%, #86d090 44%, #74cfe0 52%, #46c0ea 56%, #2a6fb8 61%, #2a4c9e 67%, #5a48a0 75%, #a04c9c 84%, #dc2890 92%, #d4142c 100%);
}
.spectrum::before {
  content: ""; position: absolute; inset: 0;
  background: linear-gradient(90deg, #e4001c 0, #e89000 9%, #dce010 17%, #7ccc20 24%, #2cc634 34%, #18c070 44%, #28c0c8 51%, #1060b0 58%, #082c90 66%, #48108c 74%, #88008c 82%, #c80070 90%, #d00020 100%);
  mask-image: linear-gradient(transparent 46%, #000 66%);
}
.spectrum::after {
  content: ""; position: absolute; inset: 0;
  background: linear-gradient(#fff 0, rgba(255,255,255,.78) 12%, rgba(255,255,255,.35) 30%, transparent 50%, transparent 58%, rgba(0,0,0,.5) 76%, #000 100%);
}
.pointer { position: absolute; left: 17px; top: 18px; z-index: 2; }

.lib { flex: 1; min-height: 0; display: flex; flex-direction: column; }
.search { display: flex; align-items: center; gap: 9px; height: 33px; margin: 13px 12px 0 9px; padding-left: 4px; border-bottom: 1px solid #5f5f5f; color: #ddd; flex: none; }
.search input { flex: 1; font-size: 11px; }
.search input::placeholder { color: #7f7f7f; opacity: 1; }
.newlib { display: flex; align-items: center; gap: 5px; padding-left: 13px; height: 46px; margin-top: 3px; font-size: 11px; font-weight: 700; flex: none; }
.lib-body { flex: 1; min-height: 0; display: flex; }
.lib-list { flex: 1; overflow: hidden; padding: 1px 11px 0 12px; display: flex; flex-direction: column; gap: 4px; }
.lib-list h3 { margin: 0 0 6px; font-size: 11px; font-weight: 500; color: #bbb; flex: none; line-height: 16px; }
.lib-list .all { margin-top: 18px; }
.lib-list button { height: 34px; flex: none; text-align: left; padding-left: 9px; border-radius: 4px; background: #444; font-size: 11px; font-weight: 500; }
.sb { width: 16px; background: #494949; padding: 3px 0; justify-content: flex-start; }
.sb i { width: 12px; height: 54px; background: #666; margin: 1px 0 auto; }
.lib-foot { height: 21px; flex: none; display: flex; align-items: center; justify-content: space-between; padding: 0 19px 2px 16px; border-top: 1px solid #494949; }

.guide { height: 42px; display: flex; align-items: center; padding: 0 0 4px 5px; }
.framed { width: 17px; height: 16px; background: #fff; border: 1px solid #eee; outline: 1px solid #444; outline-offset: -3px; }
.base { width: 20px; height: 20px; border: 1px solid #222; }
.harmony { display: flex; align-items: center; width: 130px; height: 24px; margin: 0 10px 0 7px; border: 1px solid #5a5a5a; background: #4b4b4b; padding-left: 1px; }
.harmony i + i { width: 16px; height: 16px; }
.g1 { background: #b09ca4; } .g2 { background: #a8ac98; } .g3 { background: #cce8cc; } .g4 { background: #8c88b0; }
.harmony .drop { margin-left: auto; height: 22px; }
.guide > svg + svg { margin-left: 9px; }

.brushes { display: flex; height: 87px; margin: 5px 5px 0; border: 1px solid #5a5a5a; }
.cells { flex: 1; min-width: 0; display: flex; flex-wrap: wrap; align-content: flex-start; gap: 1px; overflow: hidden; color: #222; }
.cells span { width: 32px; height: 32px; background: #e2e2e2; }
.cells .basic { width: 100%; display: flex; align-items: center; gap: 5px; padding: 0 6px; margin-right: 2px; font-size: 12px; }
.basic i { flex: 1; height: 2px; background: #000; }
.slim { width: 13px; margin: 0; }
.slim i { width: 10px; height: 25px; border-radius: 5px; background: #626262; }
.brush-foot { height: 20px; display: flex; align-items: center; gap: 10px; padding: 0 27px 0 10px; }
.brush-actions { display: flex; gap: 14px; margin-left: auto; }
```
